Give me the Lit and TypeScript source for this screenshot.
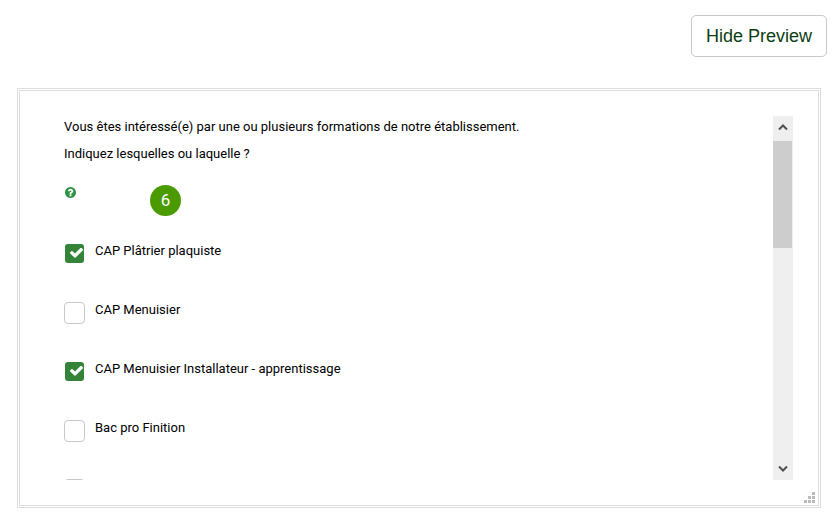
import { LitElement, html, css } from "lit";
import { customElement, property, state } from "lit/decorators.js";

@customElement("option-row")
class OptionRow extends LitElement {
  @property() label = "";
  @property({ type: Boolean }) checked = false;

  static styles = css`
    :host {
      display: block;
      height: 59px;
    }
    .row {
      display: flex;
      align-items: flex-start;
      gap: 10px;
      width: fit-content;
      line-height: 16px;
    }
    .tick {
      display: grid;
      width: 21px;
      height: 21px;
    }
    .tick > * {
      grid-area: 1 / 1;
    }
    .box {
      appearance: none;
      box-sizing: border-box;
      width: 21px;
      height: 22px;
      margin: 0;
      border: 1px solid #c8c8c8;
      border-radius: 4px;
      background: #fff;
    }
    .box:checked {
      height: 21px;
      border-color: transparent;
      background: #338339;
      background-clip: padding-box;
    }
    .mark {
      width: 13px;
      height: 10px;
      margin: 5px 0 0 6px;
      fill: #fff;
      pointer-events: none;
      display: none;
    }
    .box:checked + .mark {
      display: block;
    }
  `;

  private toggle(e: Event) {
    this.checked = (e.target as HTMLInputElement).checked;
  }

  render() {
    return html`<label class="row">
      <span class="tick">
        <input class="box" type="checkbox" .checked=${this.checked} @change=${this.toggle} />
        <svg class="mark" viewBox="121 370 1550 1152" aria-hidden="true">
          <path
            d="M1671 566q0 40-28 68l-724 724-136 136q-28 28-68 28t-68-28l-136-136-362-362q-28-28-28-68t28-68l136-136q28-28 68-28t68 28l294 295 656-657q28-28 68-28t68 28l136 136q28 28 28 68z"
          />
        </svg>
      </span>
      <span>${this.label}</span>
    </label>`;
  }
}

@customElement("app-root")
class AppRoot extends LitElement {
  @state() private options = [
    { label: "CAP Plâtrier plaquiste", checked: true },
    { label: "CAP Menuisier", checked: false },
    { label: "CAP Menuisier Installateur - apprentissage", checked: true },
    { label: "Bac pro Finition", checked: false },
    { label: "", checked: false },
  ];

  static styles = css`
    :host {
      display: flex;
      flex-direction: column;
      box-sizing: border-box;
      height: 100vh;
      padding: 15px 11px 13px 17px;
      gap: 31px;
      background: #fff;
      color: #000;
      font: 13px/27px Roboto, sans-serif;
    }
    .toggle {
      align-self: flex-end;
      flex: none;
      height: 42px;
      padding: 0 14px;
      border: 1px solid #c8c8c8;
      border-radius: 5px;
      background: #fff;
      color: #0b3d12;
      font: 18px/24px "Liberation Sans", Arial, sans-serif;
    }
    .panel {
      position: relative;
      flex: 1;
      min-height: 0;
      display: flex;
      margin-right: 6px;
      padding: 25px 25px 25px 44px;
      border: 3px double #ddd;
    }
    .content {
      flex: 1;
      overflow: auto;
      scrollbar-width: none;
    }
    .question {
      margin: 0;
    }
    .question p {
      margin: 0;
    }
    .question p:first-child {
      line-height: 21px;
      margin-bottom: 3px;
    }
    .hints {
      display: flex;
      align-items: flex-start;
      gap: 74px;
      padding: 18px 0 27px 1px;
    }
    .help {
      width: 11px;
      height: 11px;
      margin-top: 2px;
      padding: 0;
      border: 0;
      background: none;
      display: flex;
    }
    .help svg {
      width: 11px;
      height: 11px;
      fill: #2f9344;
    }
    .badge {
      width: 31px;
      height: 31px;
      border-radius: 50%;
      background: #4b9a00;
      color: #fff;
      font-size: 17px;
      line-height: 31px;
      text-align: center;
    }
    .scrollbar {
      flex: none;
      display: flex;
      flex-direction: column;
      width: 20px;
      background: #efefef;
    }
    .arrow {
      display: flex;
      justify-content: center;
      box-sizing: border-box;
      height: 25px;
      padding: 7px 0;
      border: 0;
      background: none;
    }
    .up {
      align-items: flex-start;
    }
    .down {
      align-items: flex-end;
    }
    .arrow svg {
      width: 10px;
      height: 8px;
      fill: none;
      stroke: #505050;
      stroke-width: 2;
    }
    .track {
      flex: 1;
    }
    .thumb {
      width: 19px;
      height: 34%;
      background: #cdcdcd;
    }
    .grip {
      position: absolute;
      right: 3px;
      bottom: 2px;
      width: 11px;
      height: 11px;
      fill: #bbb;
    }
  `;

  private scroll(step: number) {
    this.renderRoot.querySelector(".content")?.scrollBy(0, step);
  }

  render() {
    return html`
      <button class="toggle">Hide Preview</button>
      <section class="panel">
        <div class="content">
          <div class="question">
            <p>Vous êtes intéressé(e) par une ou plusieurs formations de notre établissement.</p>
            <p>Indiquez lesquelles ou laquelle ?</p>
          </div>
          <div class="hints">
            <button class="help" aria-label="Aide">
              <svg viewBox="128 128 1536 1536">
                <path
                  d="M1024 1376v-192q0-14-9-23t-23-9h-192q-14 0-23 9t-9 23v192q0 14 9 23t23 9h192q14 0 23-9t9-23zm256-672q0-88-55.5-163t-138.5-116-170-41q-243 0-371 213-15 24 8 42l132 100q7 6 19 6 16 0 25-12 53-68 86-92 34-24 86-24 48 0 85.5 26t37.5 59q0 38-20 61t-68 45q-63 28-115.5 86.5t-52.5 125.5v36q0 14 9 23t23 9h192q14 0 23-9t9-23q0-19 21.5-49.5t54.5-49.5q32-18 49-28.5t46-35 44.5-48 28-60.5 12.5-81zm384 192q0 209-103 385.5t-279.5 279.5-385.5 103-385.5-103-279.5-279.5-103-385.5 103-385.5 279.5-279.5 385.5-103 385.5 103 279.5 279.5 103 385.5z"
                />
              </svg>
            </button>
            <span class="badge">6</span>
          </div>
          ${this.options.map(
            (o) => html`<option-row .label=${o.label} .checked=${o.checked}></option-row>`
          )}
        </div>
        <div class="scrollbar">
          <button class="arrow up" aria-label="Défiler vers le haut" @click=${() => this.scroll(-59)}>
            <svg viewBox="0 0 10 8"><path d="M1 6.500 5 2.500 9 6.500" /></svg>
          </button>
          <div class="track"><div class="thumb"></div></div>
          <button class="arrow down" aria-label="Défiler vers le bas" @click=${() => this.scroll(59)}>
            <svg viewBox="0 0 10 8"><path d="M1 1.500 5 5.500 9 1.500" /></svg>
          </button>
        </div>
        <svg class="grip" viewBox="0 0 11 11" aria-hidden="true">
          <path d="M8 0h3v3h-3zM4 4h3v3h-3zM8 4h3v3h-3zM0 8h3v3h-3zM4 8h3v3h-3zM8 8h3v3h-3z" />
        </svg>
      </section>
    `;
  }
}
